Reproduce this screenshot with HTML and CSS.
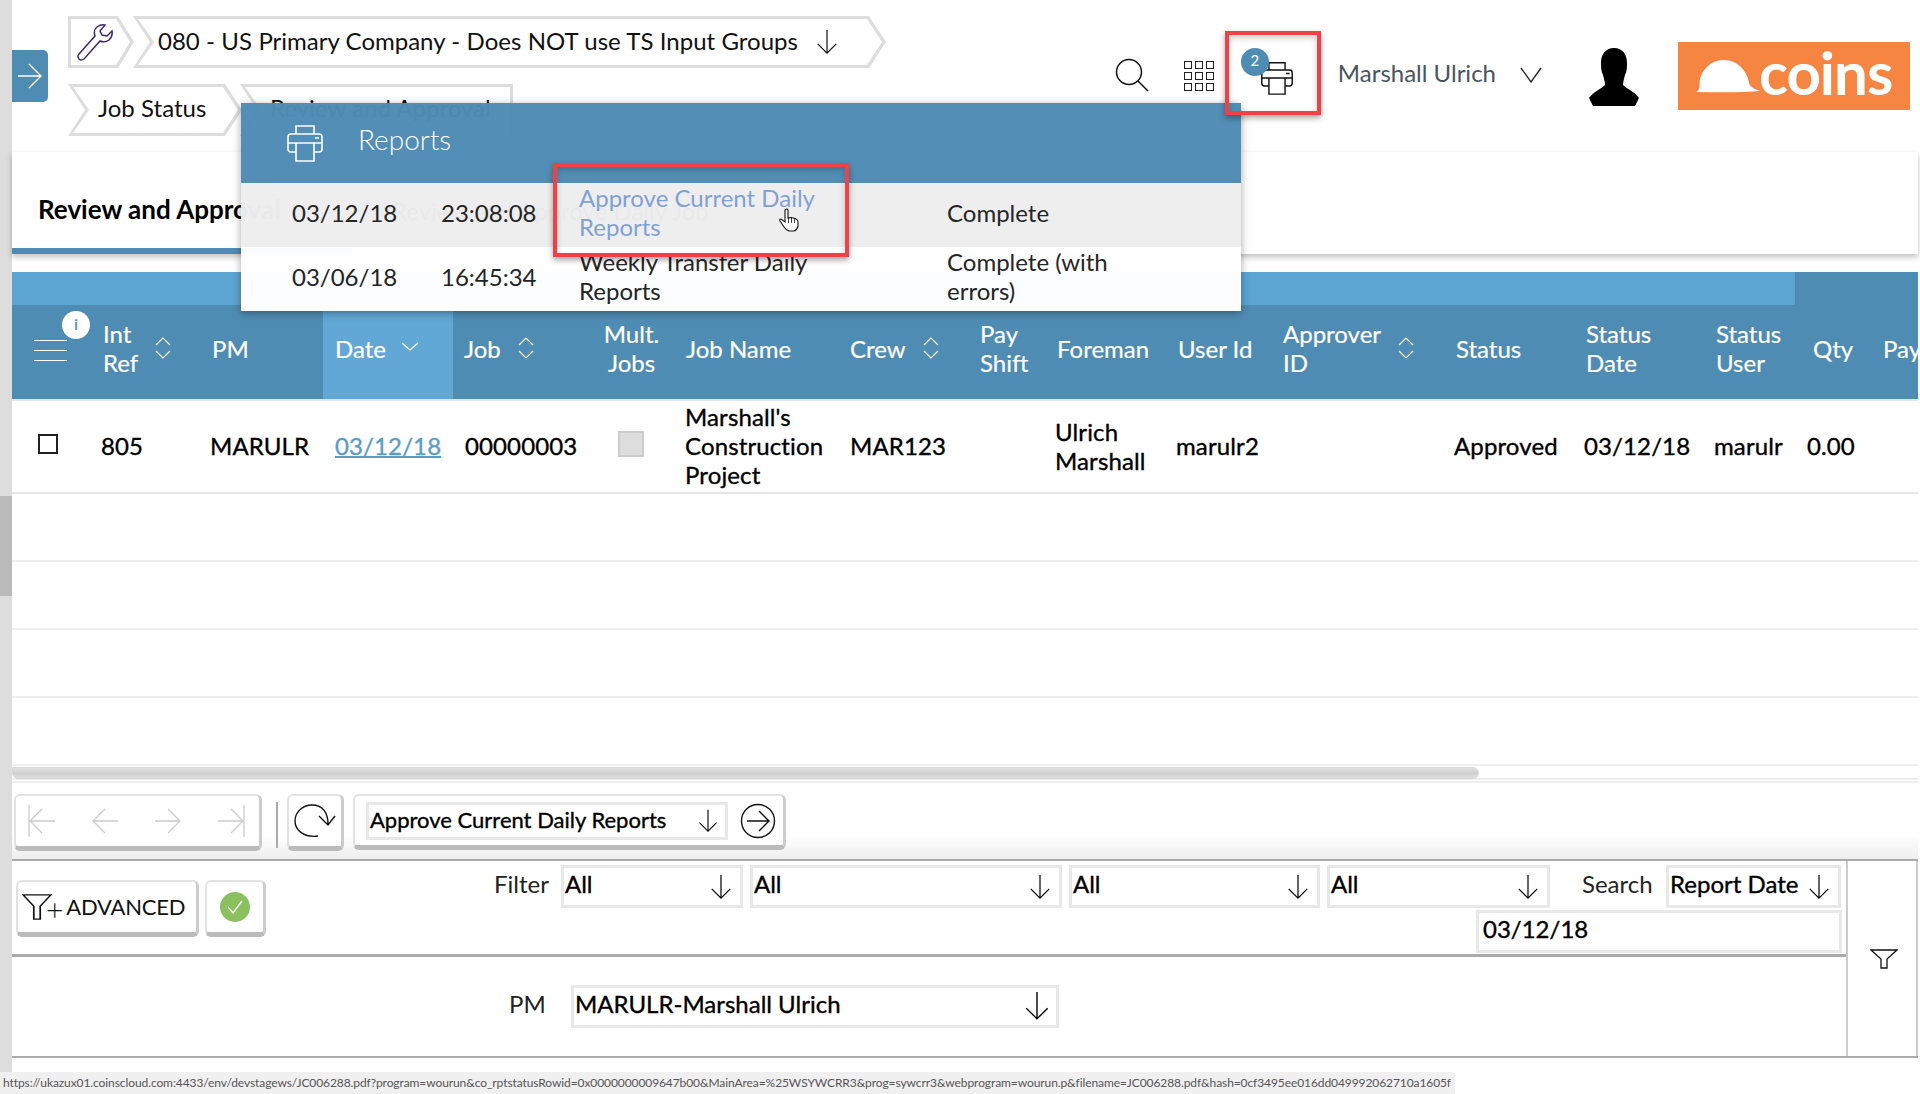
FILE: index.html
```html
<!DOCTYPE html>
<html lang="en">
<head>
  <meta charset="UTF-8">
  <title>Review and Approval</title>
  <link rel="stylesheet" href="styles.css">
</head>
<body>
  <!-- Icon sprite -->
  <svg class="sprite" xmlns="http://www.w3.org/2000/svg">
    <symbol id="i-down" viewBox="0 0 24 28"><path d="M12 1V26M2 16L12 26L22 16" fill="none" stroke="currentColor" stroke-width="1.3"/></symbol>
    <symbol id="i-sort" viewBox="0 0 16 24"><path d="M1 9L8 2L15 9M1 15L8 22L15 15" fill="none" stroke="currentColor" stroke-width="1.2"/></symbol>
    <symbol id="i-printer" viewBox="0 0 36 38"><path d="M9 10V2H27V10M9 28H4Q1 28 1 25V13Q1 10 4 10H32Q35 10 35 13V25Q35 28 32 28H27M1 19H35M9 19H27V37H9ZM28 14H32" fill="none" stroke="currentColor" stroke-width="1.6"/></symbol>
  </svg>

  <div class="page">
    <div class="side-strip"><div class="side-thumb"></div></div>

    <div class="main">
      <!-- Top bar -->
      <header class="top">
        <button class="toggle">
          <svg width="24" height="26" viewBox="0 0 24 26"><path d="M0 13H23M11 1L23 13L11 25" fill="none" stroke="#fff" stroke-width="1.4"/></svg>
        </button>
        <div class="crumbs">
          <div class="crumb-row">
            <div class="crumb crumb-first">
              <svg width="38" height="38" viewBox="0 0 38 38"><path d="M3 31L19 13Q17 7 21 4Q25 1 29 2L24 8L26 12L31 13L36 8Q37 13 33 17Q29 20 24 18L8 36Q5 38 3 36Q1 33 3 31Z" fill="none" stroke="#3c2a78" stroke-width="1.5"/></svg>
            </div>
            <div class="crumb crumb-company">
              <span class="crumb-text">080 - US Primary Company - Does NOT use TS Input Groups</span>
              <svg class="ic-down" width="24" height="26"><use href="#i-down"/></svg>
            </div>
          </div>
          <div class="crumb-row">
            <div class="crumb crumb-job"><span class="crumb-text">Job Status</span></div>
            <div class="crumb crumb-review"><span class="crumb-text">Review and Approval</span></div>
          </div>
        </div>

        <div class="tools">
          <svg class="t-search" width="34" height="34" viewBox="0 0 34 34"><circle cx="14" cy="14" r="12.5" fill="none" stroke="#111" stroke-width="1.5"/><path d="M23 23L33 33" stroke="#111" stroke-width="1.5"/></svg>
          <div class="t-grid">
            <i></i><i></i><i></i><i></i><i></i><i></i><i></i><i></i><i></i>
          </div>
          <div class="t-print">
            <svg width="34" height="34"><use href="#i-printer"/></svg>
            <span class="badge">2</span>
          </div>
          <span class="user-name">Marshall Ulrich</span>
          <svg class="t-chevron" width="22" height="16" viewBox="0 0 22 16"><path d="M1 1L11 15L21 1" fill="none" stroke="#222" stroke-width="1.3"/></svg>
          <svg class="t-user" width="52" height="58" viewBox="0 0 52 58"><path d="M26 0C17 0 13 7 13 15C13 19 13 23 15 27C16 31 17 34 17 37C13 41 5 44 1 50L5 58H47L51 50C47 44 39 41 35 37C35 34 36 31 37 27C39 23 39 19 39 15C39 7 35 0 26 0Z" fill="#000"/></svg>
          <div class="logo">
            <svg width="66" height="34" viewBox="0 0 58 34" preserveAspectRatio="none"><path d="M1 33C4 31 4 28 4 24C5 11 14 1 25 1C38 1 46 12 48 26C50 29 54 31 57 32Q40 34 1 33Z" fill="#fff"/></svg>
            <span>coins</span>
          </div>
        </div>
      </header>

      <!-- Title strip -->
      <div class="title-panel">
        <div class="tab-active">Review and Approval</div>
        <div class="tab-other">Review and Approve Daily Job</div>
      </div>

      <!-- Grid -->
      <div class="band"><div class="band-light"></div></div>
      <div class="grid-wrap">
        <table class="grid">
          <colgroup>
            <col><col><col><col><col><col><col><col><col><col><col><col><col><col><col><col><col>
          </colgroup>
          <thead>
            <tr>
              <th class="th-menu">
                <div class="menu-lines"><i></i><i></i><i></i></div>
                <span class="info">i</span>
              </th>
              <th><div class="th-sort"><span>Int<br>Ref</span><svg width="16" height="24"><use href="#i-sort"/></svg></div></th>
              <th>PM</th>
              <th class="th-date"><div class="th-sort"><span>Date</span><svg class="date-chev" width="18" height="9" viewBox="0 0 18 9"><path d="M1 1L9 8L17 1" fill="none" stroke="#fff" stroke-width="1.2"/></svg></div></th>
              <th><div class="th-sort"><span>Job</span><svg width="16" height="24"><use href="#i-sort"/></svg></div></th>
              <th class="center">Mult.<br>Jobs</th>
              <th>Job Name</th>
              <th><div class="th-sort"><span>Crew</span><svg width="16" height="24"><use href="#i-sort"/></svg></div></th>
              <th>Pay<br>Shift</th>
              <th>Foreman</th>
              <th>User Id</th>
              <th><div class="th-sort"><span>Approver<br>ID</span><svg width="16" height="24"><use href="#i-sort"/></svg></div></th>
              <th>Status</th>
              <th>Status<br>Date</th>
              <th>Status<br>User</th>
              <th>Qty</th>
              <th>Pay</th>
            </tr>
          </thead>
          <tbody>
            <tr class="row-data">
              <td><span class="cb"></span></td>
              <td>805</td>
              <td>MARULR</td>
              <td class="td-date"><a class="date-link" href="#">03/12/18</a></td>
              <td class="td-job">00000003</td>
              <td class="center"><span class="cb-off"></span></td>
              <td class="td-name">Marshall's Construction Project</td>
              <td class="td-crew">MAR123</td>
              <td></td>
              <td>Ulrich Marshall</td>
              <td>marulr2</td>
              <td></td>
              <td>Approved</td>
              <td>03/12/18</td>
              <td>marulr</td>
              <td class="td-qty">0.00</td>
              <td></td>
            </tr>
            <tr class="row-empty"><td colspan="17"></td></tr>
            <tr class="row-empty"><td colspan="17"></td></tr>
            <tr class="row-empty"><td colspan="17"></td></tr>
            <tr class="row-empty"><td colspan="17"></td></tr>
          </tbody>
        </table>
      </div>

      <div class="scroll"><div class="scroll-thumb"></div></div>

      <!-- Toolbar -->
      <div class="toolbar">
        <div class="btn nav-group">
          <svg width="28" height="32" viewBox="0 0 28 32"><path d="M1 0V32M27 16H2M14 4L2 16L14 28" fill="none" stroke="#ccc" stroke-width="1.3"/></svg>
          <svg width="28" height="32" viewBox="0 0 28 32"><path d="M27 16H2M14 4L2 16L14 28" fill="none" stroke="#ccc" stroke-width="1.3"/></svg>
          <svg width="28" height="32" viewBox="0 0 28 32"><path d="M1 16H26M14 4L26 16L14 28" fill="none" stroke="#ccc" stroke-width="1.3"/></svg>
          <svg width="28" height="32" viewBox="0 0 28 32"><path d="M27 0V32M1 16H26M14 4L26 16L14 28" fill="none" stroke="#ccc" stroke-width="1.3"/></svg>
        </div>
        <div class="sep"></div>
        <div class="btn refresh">
          <svg width="42" height="34" viewBox="0 0 42 34"><path d="M24 32C10 34 1 26 1 17C1 7 10 1 18 1C29 1 34 9 34 20M25 12L34 21L41 12" fill="none" stroke="#111" stroke-width="1.4"/></svg>
        </div>
        <div class="btn run-group">
          <div class="select select-report">
            <span class="up">Approve Current Daily Reports</span>
            <svg width="22" height="24"><use href="#i-down"/></svg>
          </div>
          <svg width="36" height="36" viewBox="0 0 36 36"><circle cx="18" cy="18" r="16.5" fill="none" stroke="#111" stroke-width="1.4"/><path d="M7 18H28M19 8L29 18L19 28" fill="none" stroke="#111" stroke-width="1.4"/></svg>
        </div>
      </div>

      <!-- Filter area -->
      <div class="filters">
        <div class="filter-main">
          <div class="filter-top">
            <div class="btn btn-adv">
              <svg width="30" height="26" viewBox="0 0 28 32" preserveAspectRatio="none"><path d="M1 1H27L17 15V31H11V15Z" fill="none" stroke="#111" stroke-width="1.6"/></svg>
              <span class="plus">+</span>
              <span class="adv-text">ADVANCED</span>
            </div>
            <div class="btn btn-ok">
              <svg width="30" height="30" viewBox="0 0 30 30"><circle cx="15" cy="15" r="15" fill="#8bc05f"/><path d="M8 15L13 21L22 9" fill="none" stroke="#fff" stroke-width="1.3"/></svg>
            </div>
            <div class="fields">
              <div class="fields-row">
                <span class="lbl lbl-filter"><span class="up">Filter</span></span>
                <div class="select f1"><span class="up">All</span><svg width="24" height="26"><use href="#i-down"/></svg></div>
                <div class="select f2"><span class="up">All</span><svg width="24" height="26"><use href="#i-down"/></svg></div>
                <div class="select f3"><span class="up">All</span><svg width="24" height="26"><use href="#i-down"/></svg></div>
                <div class="select f4"><span class="up">All</span><svg width="24" height="26"><use href="#i-down"/></svg></div>
                <span class="lbl lbl-search"><span class="up">Search</span></span>
                <div class="select f5"><span class="up">Report Date</span><svg width="24" height="26"><use href="#i-down"/></svg></div>
              </div>
              <div class="select date-input"><span class="up">03/12/18</span></div>
            </div>
          </div>
          <div class="filter-pm">
            <span class="lbl lbl-pm"><span class="up">PM</span></span>
            <div class="select pm-select"><span class="up">MARULR-Marshall Ulrich</span><svg width="26" height="30"><use href="#i-down"/></svg></div>
          </div>
        </div>
        <div class="filter-side">
          <svg width="28" height="20" viewBox="0 0 28 20"><path d="M1 1H27L17 10V19H11V10Z" fill="none" stroke="#111" stroke-width="1.3"/></svg>
        </div>
      </div>
    </div>
  </div>

  <!-- Reports popup -->
  <div class="popup">
    <div class="popup-head">
      <svg width="36" height="38"><use href="#i-printer"/></svg>
      <span>Reports</span>
    </div>
    <div class="popup-row popup-row-on">
      <span>03/12/18</span>
      <span>23:08:08</span>
      <a class="popup-link" href="#">Approve Current Daily Reports</a>
      <span>Complete</span>
    </div>
    <div class="popup-row">
      <span>03/06/18</span>
      <span>16:45:34</span>
      <span>Weekly Transfer Daily Reports</span>
      <span>Complete (with errors)</span>
    </div>
  </div>

  <!-- Red callouts and cursor -->
  <div class="callout callout-print"></div>
  <div class="callout callout-link"></div>
  <svg class="cursor" width="22" height="24" viewBox="0 0 22 24"><path d="M7 2Q9 0 10 2V10L13 9.500L15.500 10L18 11Q20 12 20 14V18Q19 22 16 23H11Q8 22 6 19L2 13Q1 11 3 11L7 14Z" fill="#fff" stroke="#111" stroke-width="1.1"/><path d="M10.500 10V15M13.500 10V15M16.500 11V15" stroke="#111" stroke-width=".8"/></svg>

  <div class="status-bar">https://ukazux01.coinscloud.com:4433/env/devstagews/JC006288.pdf?program=wourun&amp;co_rptstatusRowid=0x0000000009647b00&amp;MainArea=%25WSYWCRR3&amp;prog=sywcrr3&amp;webprogram=wourun.p&amp;filename=JC006288.pdf&amp;hash=0cf3495ee016dd049992062710a1605f</div>
</body>
</html>
```

FILE: styles.css
```css
* {
  box-sizing: border-box;
}

html, body {
  margin: 0;
  height: 100%;
  overflow: hidden;
}

body {
  position: relative;
  background: #fff;
  color: #111;
  font-family: Lato, "Open Sans", sans-serif;
  font-size: 24px;
  line-height: 29px;
}

.sprite {
  position: absolute;
  width: 0;
  height: 0;
}

.up {
  margin-bottom: 6px;
}

.page {
  display: flex;
  height: 1094px;
}

/* Left scroll strip */
.side-strip {
  width: 12px;
  flex: none;
  background: #ddd;
  padding-top: 496px;
}

.side-thumb {
  height: 100px;
  background: #bbb;
}

.main {
  width: 1906px;
  flex: none;
}

/* Top bar */
.top {
  display: flex;
  height: 152px;
  padding-top: 16px;
}

.toggle {
  width: 36px;
  height: 52px;
  margin: 34px 20px 0 0;
  padding: 0;
  border: 0;
  border-radius: 0 5px 5px 0;
  background: #4f8cb4;
  display: flex;
  align-items: center;
  justify-content: center;
}

.crumbs {
  display: flex;
  flex-direction: column;
  gap: 16px;
}

.crumb-row {
  display: flex;
}

.crumb {
  position: relative;
  height: 52px;
  display: flex;
  align-items: center;
  background: #ddd;
  isolation: isolate;
}

.crumb::before {
  content: "";
  position: absolute;
  inset: 0;
  z-index: -1;
  background: #fff;
}

.crumb-text {
  margin-bottom: 5px;
  white-space: nowrap;
  word-spacing: .2px;
}

.crumb-first {
  width: 66px;
  padding-left: 8px;
  clip-path: polygon(0 0, 50px 0, 100% 50%, 50px 100%, 0 100%);
}

.crumb-first::before {
  clip-path: polygon(3px 3px, 48px 3px, 62px 50%, 48px calc(100% - 3px), 3px calc(100% - 3px));
}

.crumb-company {
  width: 753px;
  padding-left: 25px;
  margin-left: -1px;
  clip-path: polygon(0 0, calc(100% - 17px) 0, 100% 50%, calc(100% - 17px) 100%, 0 100%, 17px 50%);
}

.crumb-company::before {
  clip-path: polygon(5px 3px, calc(100% - 19px) 3px, calc(100% - 4px) 50%, calc(100% - 19px) calc(100% - 3px), 5px calc(100% - 3px), 21px 50%);
}

.crumb-company .crumb-text {
  margin-bottom: 3px;
}

.ic-down {
  margin-left: 17px;
}

.crumb-job {
  width: 174px;
  padding-left: 30px;
  clip-path: polygon(0 0, calc(100% - 17px) 0, 100% 50%, calc(100% - 17px) 100%, 0 100%, 17px 50%);
}

.crumb-job::before {
  clip-path: polygon(5px 3px, calc(100% - 19px) 3px, calc(100% - 4px) 50%, calc(100% - 19px) calc(100% - 3px), 5px calc(100% - 3px), 21px 50%);
}

.crumb-review {
  width: 273px;
  padding-left: 30px;
  margin-left: -2px;
  clip-path: polygon(0 0, 100% 0, 100% 100%, 0 100%, 17px 50%);
}

.crumb-review::before {
  clip-path: polygon(5px 3px, calc(100% - 3px) 3px, calc(100% - 3px) 100%, 5px 100%, 21px 50%);
}

/* Right tools */
.tools {
  margin-left: auto;
  display: flex;
  align-items: center;
  height: 118px;
  margin-top: -16px;
  padding: 32px 8px 0 0;
}

.t-grid {
  display: grid;
  grid-template-columns: repeat(3, 8px);
  gap: 3px;
  margin: 2px 0 0 35px;
}

.t-grid i {
  height: 8px;
  border: 1.5px solid #222;
}

.t-print {
  position: relative;
  width: 51px;
  height: 46px;
  margin: -8px 0 0 27px;
  padding: 13px 0 0 19px;
  color: #111;
}

.badge {
  position: absolute;
  top: 0;
  left: 0;
  width: 28px;
  height: 28px;
  border-radius: 50%;
  background: #4f8cb4;
  color: #fff;
  font-size: 15px;
  line-height: 24px;
  text-align: center;
}

.user-name {
  margin: -6px 0 0 46px;
  color: #4a5560;
  white-space: nowrap;
}

.t-chevron {
  margin-left: 24px;
}

.t-user {
  margin-left: 46px;
  margin-top: 3px;
}

.logo {
  width: 232px;
  height: 68px;
  margin: 2px 0 0 38px;
  padding-left: 17px;
  background: #f58540;
  display: flex;
  align-items: center;
  color: #fff;
  font-size: 60px;
  font-weight: 700;
  line-height: 60px;
  letter-spacing: -1px;
}

.logo svg {
  flex: none;
}

.logo span {
  margin: -8px 0 0 -2px;
}

/* Title strip */
.title-panel {
  height: 102px;
  display: flex;
  box-shadow: 0 3px 6px rgba(0, 0, 0, .25);
}

.tab-active {
  width: 340px;
  padding: 43px 0 0 26px;
  border-bottom: 6px solid #4f8cb4;
  font-weight: 700;
  font-size: 26px;
  color: #000;
}

.tab-other {
  padding: 44px 0 0 40px;
}

/* Grid */
.band {
  height: 33px;
  margin-top: 18px;
  background: #4f8cb4;
}

.band-light {
  width: 1783px;
  height: 100%;
  background: #5ca5d3;
}

.grid-wrap {
  overflow: hidden;
}

.grid {
  width: 1911px;
  table-layout: fixed;
  border-collapse: collapse;
}

.grid col:nth-child(1) { width: 80px; }
.grid col:nth-child(2) { width: 109px; }
.grid col:nth-child(3) { width: 122px; }
.grid col:nth-child(4) { width: 130px; }
.grid col:nth-child(5) { width: 144px; }
.grid col:nth-child(6) { width: 78px; }
.grid col:nth-child(7) { width: 164px; }
.grid col:nth-child(8) { width: 130px; }
.grid col:nth-child(9) { width: 77px; }
.grid col:nth-child(10) { width: 121px; }
.grid col:nth-child(11) { width: 105px; }
.grid col:nth-child(12) { width: 173px; }
.grid col:nth-child(13) { width: 130px; }
.grid col:nth-child(14) { width: 130px; }
.grid col:nth-child(15) { width: 97px; }
.grid col:nth-child(16) { width: 70px; }
.grid col:nth-child(17) { width: 60px; }

.grid th {
  height: 95px;
  padding: 0 0 8px 11px;
  background: #4f8cb4;
  color: #fff;
  font-weight: 400;
  text-align: left;
  white-space: nowrap;
  -webkit-text-stroke: .2px #fff;
}

.grid th.th-date {
  background: #61a8d6;
  padding-left: 12px;
}

.grid th.center {
  text-align: center;
  padding-left: 0;
  padding-right: 9px;
}

.grid td.center {
  padding-left: 0;
}

.th-menu {
  position: relative;
}

.menu-lines {
  display: flex;
  flex-direction: column;
  gap: 9px;
  margin: 4px 0 0 11px;
  width: 33px;
}

.menu-lines i {
  height: 1px;
  background: #fff;
}

.info {
  position: absolute;
  top: 6px;
  left: 50px;
  width: 28px;
  height: 28px;
  border-radius: 50%;
  background: #fff;
  color: #4f8cb4;
  font-size: 16px;
  line-height: 26px;
  font-weight: 700;
  text-align: center;
}

.th-sort {
  display: flex;
  align-items: center;
  gap: 17px;
}

.date-chev {
  margin: -4px 0 0 -2px;
}

.row-data td {
  height: 93px;
  padding: 0 6px 2px 9px;
  border-top: 2px solid #e6e6e6;
  border-bottom: 2px solid #e6e6e6;
  color: #000;
  letter-spacing: .12px;
  -webkit-text-stroke: .35px #000;
}

.row-data td.td-date {
  padding-left: 12px;
  -webkit-text-stroke: .35px #5b9cc5;
}

.row-data td.td-job {
  padding-left: 12px;
}

.row-data td.td-name {
  padding-left: 10px;
}

.row-data td.td-crew {
  padding-left: 11px;
}

.row-data td.td-qty {
  padding-left: 5px;
}

.cb {
  display: block;
  width: 20px;
  height: 20px;
  margin: -3px 0 0 17px;
  border: 2px solid #222;
}

.cb-off {
  display: block;
  width: 26px;
  height: 26px;
  margin: -3px 0 0 21px;
  background: #ddd;
  border: 2px solid #ccc;
}

.date-link {
  color: #5b9cc5;
  text-decoration: underline;
  text-decoration-thickness: 2px;
}

.row-empty td {
  height: 68px;
  border-bottom: 2px solid #eee;
}

.scroll {
  height: 14px;
  padding-top: 1px;
  border-bottom: 2px solid #eee;
}

.scroll-thumb {
  width: 1467px;
  height: 12px;
  border-radius: 0 6px 6px 6px;
  background: linear-gradient(#e2e2e2, #cfcfcf 50%, #dedede);
  border: 1px solid #d8d8d8;
}

/* Toolbar */
.toolbar {
  height: 80px;
  padding: 11px 0 0 2px;
  margin-top: 1px;
  display: flex;
  align-items: flex-start;
  border-top: 2px solid #eee;
  border-bottom: 2px solid #aaa;
  background: linear-gradient(#fff 52px, #eee);
}

.btn {
  display: flex;
  align-items: center;
  background: #fff;
  border: 2px solid #e2e2e2;
  border-bottom: 5px solid #bbb;
  border-right-width: 3px;
  border-right-color: #ccc;
  border-radius: 6px;
}

.nav-group {
  width: 248px;
  height: 57px;
  padding-left: 12px;
  gap: 35px;
}

.sep {
  width: 2px;
  height: 46px;
  margin: 8px 9px 0 14px;
  background: #aaa;
}

.refresh {
  width: 57px;
  height: 57px;
  justify-content: center;
}

.run-group {
  width: 433px;
  height: 56px;
  margin-left: 9px;
  padding-left: 11px;
  gap: 12px;
}

.select {
  display: flex;
  align-items: center;
  justify-content: space-between;
  height: 43px;
  padding: 0 7px 0 1px;
  border: 3px solid #e8e8e8;
  background: #fff;
  color: #000;
  white-space: nowrap;
  -webkit-text-stroke: .35px #000;
}

.select-report {
  width: 362px;
  height: 38px;
  padding-right: 6px;
  font-size: 22px;
}

.select-report .up {
  margin-bottom: 2px;
}

/* Filter area */
.filters {
  display: flex;
  height: 197px;
  border-bottom: 2px solid #aaa;
}

.filter-main {
  width: 1834px;
  flex: none;
}

.filter-top {
  display: flex;
  height: 96px;
  padding-left: 4px;
  border-bottom: 3px solid #aaa;
}

.btn-adv {
  width: 183px;
  height: 57px;
  margin-top: 19px;
  padding-left: 4px;
  font-size: 22px;
  letter-spacing: -.2px;
}

.adv-text {
  margin-bottom: 2px;
}

.plus {
  margin: 4px 3px 0 -6px;
  font-size: 30px;
  line-height: 20px;
  font-weight: 300;
}

.btn-ok {
  width: 61px;
  height: 57px;
  margin: 19px 0 0 6px;
  justify-content: center;
}

.fields {
  margin-left: 228px;
  padding-top: 4px;
  width: 1348px;
  display: flex;
  flex-direction: column;
}

.fields-row {
  display: flex;
}

.lbl {
  display: flex;
  align-items: center;
  height: 43px;
  color: #222;
}

.lbl-filter {
  width: 67px;
}

.f1 { width: 182px; margin-right: 7px; }
.f2 { width: 312px; margin-right: 7px; }
.f3 { width: 251px; margin-right: 7px; }
.f4 { width: 223px; }

.lbl-search {
  width: 116px;
  padding-left: 32px;
}

.f5 {
  width: 175px;
}

.date-input {
  width: 366px;
  margin: 2px 0 0 auto;
  padding-left: 4px;
}

.filter-pm {
  display: flex;
  align-items: center;
  height: 98px;
  padding-left: 497px;
}

.lbl-pm {
  width: 62px;
}

.pm-select {
  width: 488px;
  padding-right: 6px;
}

.filter-side {
  width: 72px;
  flex: none;
  display: flex;
  align-items: center;
  justify-content: center;
  padding-left: 4px;
  border-left: 2px solid #ccc;
  border-right: 2px solid #ccc;
}

/* Reports popup */
.popup {
  position: absolute;
  top: 103px;
  left: 241px;
  width: 1000px;
  box-shadow: 0 2px 8px rgba(0, 0, 0, .35);
  opacity: .98;
}

.popup-head {
  height: 80px;
  display: flex;
  align-items: center;
  gap: 35px;
  padding: 0 0 0 46px;
  background: #4f8cb4;
  color: #fff;
  font-size: 28px;
  font-weight: 300;
}

.popup-head span {
  margin-bottom: 8px;
}

.popup-row {
  display: grid;
  grid-template-columns: 149px 138px 368px 1fr;
  align-items: center;
  height: 64px;
  padding: 0 0 12px 51px;
  background: #fff;
  color: #222;
}

.popup-row-on {
  background: #eee;
}

.popup-row span:nth-child(4) {
  max-width: 200px;
}

.popup-link {
  width: 270px;
  color: #7f9fd8;
  text-decoration: none;
}

.popup-row span:nth-child(3) {
  width: 270px;
}

/* Red callouts */
.callout {
  position: absolute;
  border: 4px solid #f04048;
  box-shadow: 0 3px 6px rgba(0, 0, 0, .35), inset 0 3px 6px rgba(0, 0, 0, .2);
}

.callout-print {
  left: 1225px;
  top: 31px;
  width: 96px;
  height: 84px;
}

.callout-link {
  left: 553px;
  top: 163px;
  width: 296px;
  height: 94px;
}

.cursor {
  position: absolute;
  left: 778px;
  top: 208px;
}

.status-bar {
  position: absolute;
  left: 0;
  bottom: 0;
  width: 1455px;
  height: 22px;
  padding-left: 3px;
  background: #f0f0f0;
  border-radius: 0 4px 0 0;
  color: #555;
  font-size: 12px;
  letter-spacing: -.09px;
  line-height: 22px;
  white-space: nowrap;
  overflow: hidden;
}
```
